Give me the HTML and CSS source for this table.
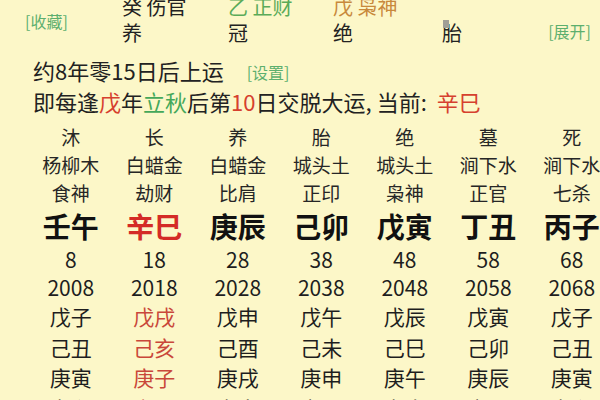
FILE: index.html
```html
<!DOCTYPE html>
<html lang="zh">
<head>
<meta charset="utf-8">
<link rel="stylesheet" href="styles.css">
</head>
<body>
<div class="page">
  <div class="header">
    <div class="fav link">[收藏]</div>
    <div class="hcol">
      <div class="hrow">癸 伤官</div>
      <div class="hrow">养</div>
    </div>
    <div class="hcol">
      <div class="hrow green">乙 正财</div>
      <div class="hrow">冠</div>
    </div>
    <div class="hcol">
      <div class="hrow orange">戊 枭神</div>
      <div class="hrow">绝</div>
    </div>
    <div class="hcol">
      <div class="hrow"></div>
      <div class="hrow"><span class="cursor-wrap">胎<span class="cursor"></span></span></div>
    </div>
    <div class="expand link">[展开]</div>
  </div>

  <div class="info">
    <p class="line">约8年零15日后上运<span class="link set">[设置]</span></p>
    <p class="line">即每逢<span class="red">戊</span>年<span class="green2">立秋</span>后第<span class="red">10</span>日交脱大运<span class="punct">,</span>当前<span class="punct">:</span> <span class="red">辛巳</span></p>
  </div>

  <div class="table">
    <div class="col">
      <div class="r1">沐</div><div class="r2">杨柳木</div><div class="r3">食神</div><div class="r4">壬午</div>
      <div class="r5">8</div><div class="r6">2008</div><div class="rn">戊子</div><div class="rn">己丑</div><div class="rn">庚寅</div><div class="rn">辛卯</div>
    </div>
    <div class="col">
      <div class="r1">长</div><div class="r2">白蜡金</div><div class="r3">劫财</div><div class="r4 pred">辛巳</div>
      <div class="r5">18</div><div class="r6">2018</div><div class="rn cred">戊戌</div><div class="rn cred">己亥</div><div class="rn cred">庚子</div><div class="rn cred">辛丑</div>
    </div>
    <div class="col">
      <div class="r1">养</div><div class="r2">白蜡金</div><div class="r3">比肩</div><div class="r4">庚辰</div>
      <div class="r5">28</div><div class="r6">2028</div><div class="rn">戊申</div><div class="rn">己酉</div><div class="rn">庚戌</div><div class="rn">辛亥</div>
    </div>
    <div class="col">
      <div class="r1">胎</div><div class="r2">城头土</div><div class="r3">正印</div><div class="r4">己卯</div>
      <div class="r5">38</div><div class="r6">2038</div><div class="rn">戊午</div><div class="rn">己未</div><div class="rn">庚申</div><div class="rn">辛酉</div>
    </div>
    <div class="col">
      <div class="r1">绝</div><div class="r2">城头土</div><div class="r3">枭神</div><div class="r4">戊寅</div>
      <div class="r5">48</div><div class="r6">2048</div><div class="rn">戊辰</div><div class="rn">己巳</div><div class="rn">庚午</div><div class="rn">辛未</div>
    </div>
    <div class="col">
      <div class="r1">墓</div><div class="r2">涧下水</div><div class="r3">正官</div><div class="r4">丁丑</div>
      <div class="r5">58</div><div class="r6">2058</div><div class="rn">戊寅</div><div class="rn">己卯</div><div class="rn">庚辰</div><div class="rn">辛巳</div>
    </div>
    <div class="col">
      <div class="r1">死</div><div class="r2">涧下水</div><div class="r3">七杀</div><div class="r4">丙子</div>
      <div class="r5">68</div><div class="r6">2068</div><div class="rn">戊子</div><div class="rn">己丑</div><div class="rn">庚寅</div><div class="rn">辛卯</div>
    </div>
  </div>
</div>
</body>
</html>
```

FILE: styles.css
```css
html, body {
  margin: 0;
  padding: 0;
  background: #fcf7c8;
  overflow: hidden;
}
body {
  width: 600px;
  height: 400px;
  font-family: "Noto Sans CJK SC", "Noto Sans", sans-serif;
  color: #222;
}
.page {
  width: 600px;
  height: 400px;
  overflow: hidden;
}
.header {
  display: grid;
  grid-template-columns: 97px 106px 105px 109px 1fr auto;
  align-items: center;
  padding-left: 25px;
  padding-right: 9px;
  margin-top: -6px;
  height: 52px;
}
.hcol {
  display: flex;
  flex-direction: column;
}
.hrow {
  height: 26px;
  line-height: 26px;
  font-size: 20px;
  white-space: nowrap;
  color: #222;
}
.link {
  color: #5caf6e;
  font-size: 16px;
  line-height: 20px;
  white-space: nowrap;
}
.fav {
  margin-top: 2px;
}
.expand {
  margin-top: 22px;
}
.hrow.green { color: #5aab58; }
.hrow.orange { color: #c8893c; }
.cursor-wrap {
  position: relative;
}
.cursor {
  position: absolute;
  left: 1px;
  top: 2px;
  width: 6px;
  height: 8px;
  background: #a09f96;
}
.info {
  padding-left: 33px;
  padding-top: 9px;
}
.line {
  margin: 0;
  font-size: 22px;
  line-height: 30.5px;
  white-space: nowrap;
  color: #222;
}
.set {
  margin-left: 23px;
  vertical-align: 1px;
}
.punct {
  margin-right: 5px;
}
.red { color: #d6402e; }
.green2 { color: #45a85a; }
.table {
  display: grid;
  grid-template-columns: repeat(7, 83.5px);
  padding-left: 29px;
  margin-top: 7px;
}
.col {
  display: flex;
  flex-direction: column;
  align-items: center;
  text-align: center;
  white-space: nowrap;
}
.r1, .r2 { height: 28px; line-height: 28px; font-size: 19px; color: #262626; }
.r3 { height: 27px; line-height: 27px; font-size: 19px; color: #262626; }
.r4 { height: 40px; line-height: 40px; font-size: 28px; font-weight: bold; color: #111; }
.r5 { height: 27px; line-height: 27px; font-size: 21px; color: #1e1e1e; }
.r6 { height: 28px; line-height: 28px; font-size: 21px; color: #1e1e1e; }
.rn { height: 30.5px; line-height: 30.5px; font-size: 21px; color: #1e1e1e; }
.pred { color: #d42b26; }
.cred { color: #c9473a; }
```
